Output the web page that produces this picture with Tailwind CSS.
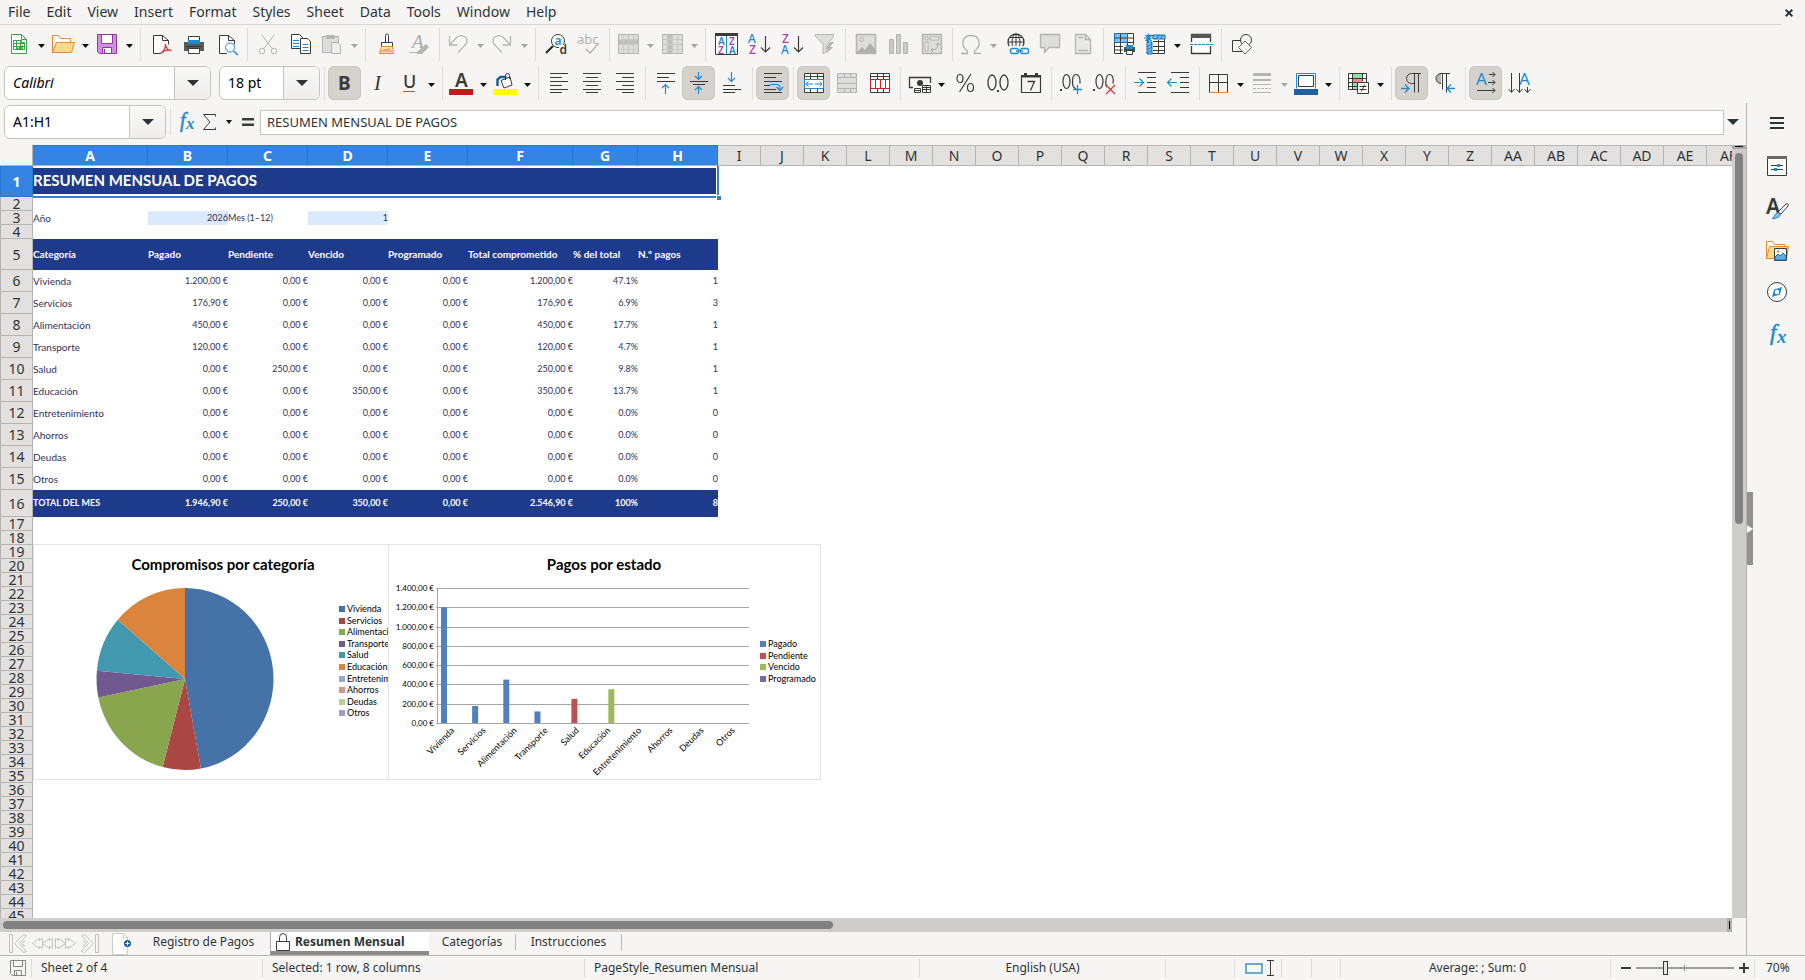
<!DOCTYPE html>
<html lang="en">
<head>
    <meta charset="UTF-8">
    <meta name="viewport" content="width=device-width, initial-scale=1.0">
    <title>Resumen Mensual - Calc</title>
    <script src="https://cdn.jsdelivr.net/npm/@tailwindcss/browser@4"></script>
</head>
<body class="h-screen flex flex-col overflow-hidden bg-[#f6f5f4] text-[#2e3436] text-sm font-['Noto_Sans',sans-serif]">
    <!-- Menu bar -->
    <nav class="flex h-[25px] shrink-0 items-start">
        <div id="menu" class="flex h-full flex-1 items-center border-b border-[#d9d8d6]"></div>
        <button aria-label="Close document" class="flex h-full w-6 items-center pl-1">
            <svg width="8" height="8" viewBox="0 0 8 8" fill="none" stroke="#2e3436" stroke-width="2"><path d="M.7.7l6.600 6.600M7.300.7L.7 7.300"/></svg>
        </button>
    </nav>

    <!-- Toolbars -->
    <div id="standard-toolbar" class="flex h-[38px] shrink-0 items-center pl-1"></div>
    <div class="flex h-10 shrink-0 items-center pl-1">
        <div class="flex h-[34px] w-[207px] shrink-0 overflow-hidden rounded-md border border-[#c6c3bf] bg-white">
            <input aria-label="Font name" value="Calibri" class="min-w-0 flex-1 px-2 italic text-black outline-none">
            <button aria-label="Font list" class="flex w-9 items-center justify-center border-l border-[#c6c3bf] bg-linear-to-b from-[#f8f8f7] to-[#eeedeb]">
                <svg width="12" height="6" viewBox="0 0 12 6" fill="#2e3436"><path d="M0 0h12L6 6z"/></svg>
            </button>
        </div>
        <div class="ml-2 flex h-[34px] w-[101px] shrink-0 overflow-hidden rounded-md border border-[#c6c3bf] bg-white">
            <input aria-label="Font size" value="18 pt" class="min-w-0 flex-1 px-2 text-black outline-none">
            <button aria-label="Size list" class="flex w-9 items-center justify-center border-l border-[#c6c3bf] bg-linear-to-b from-[#f8f8f7] to-[#eeedeb]">
                <svg width="12" height="6" viewBox="0 0 12 6" fill="#2e3436"><path d="M0 0h12L6 6z"/></svg>
            </button>
        </div>
        <div id="format-toolbar" class="flex items-center"></div>
    </div>

    <div class="flex min-h-0 flex-1">
        <main class="flex min-w-0 flex-1 flex-col">
            <!-- Formula bar -->
            <div class="flex h-[42px] shrink-0 items-center pb-1 pl-1">
                <div class="flex h-[34px] w-[162px] shrink-0 overflow-hidden rounded-md border border-[#c6c3bf] bg-white">
                    <input aria-label="Name box" value="A1:H1" class="min-w-0 flex-1 px-2 text-black outline-none">
                    <button aria-label="Named ranges" class="flex w-9 items-center justify-center border-l border-[#c6c3bf] bg-linear-to-b from-[#f8f8f7] to-[#eeedeb]">
                        <svg width="12" height="6" viewBox="0 0 12 6" fill="#2e3436"><path d="M0 0h12L6 6z"/></svg>
                    </button>
                </div>
                <div class="ml-1 h-[26px] w-px bg-[#dddcda]"></div>
                <button aria-label="Function wizard" class="ml-1">
                    <svg width="24" height="24" viewBox="0 0 24 24" fill="#1e8bcd" font-family="Liberation Serif" font-style="italic" font-weight="bold"><text x="5" y="17" font-size="20" font-weight="normal" stroke="#1e8bcd" stroke-width=".5">f</text><text x="11" y="19" font-size="17">x</text></svg>
                </button>
                <button aria-label="Select function" class="flex items-center">
                    <svg width="24" height="24" viewBox="0 0 24 24" fill="none" stroke="#3a3a38"><path d="M16.500 6.500V4.500H4.500L11 12l-6.500 7.500h12v-2"/></svg>
                    <svg class="ml-[3px]" width="6" height="4" viewBox="0 0 6 4" fill="#111"><path d="M0 0h6L3 4z"/></svg>
                </button>
                <button aria-label="Formula" class="ml-1">
                    <svg width="24" height="24" viewBox="0 0 24 24" fill="#3a3a38"><path d="M6 8h12v2.500H6zM6 13.500h12V16H6z"/></svg>
                </button>
                <input aria-label="Input line" value="RESUMEN MENSUAL DE PAGOS" class="h-[25px] min-w-0 flex-1 border border-[#c6c3bf] bg-white px-1.5 text-[13px] outline-none">
                <button aria-label="Expand formula bar" class="flex w-[22px] justify-center pr-1">
                    <svg width="12" height="6" viewBox="0 0 12 6" fill="#2e3436"><path d="M0 0h12L6 6z"/></svg>
                </button>
            </div>

            <!-- Sheet -->
            <div class="flex min-h-0 flex-1">
                <div class="relative min-w-0 flex-1 overflow-hidden bg-white">
                    <table class="w-0 table-fixed border-separate border-spacing-0">
                        <colgroup id="cols"></colgroup>
                        <thead><tr id="col-heads" class="h-[21px]"></tr></thead>
                        <tbody id="rows" class="font-[Lato,sans-serif] text-[10px] leading-3 text-[#2f3158]"></tbody>
                    </table>
                    <!-- Charts float over the cells -->
                    <div class="absolute left-[33px] top-[399px] flex font-[Lato,sans-serif]">
                        <svg id="pie" class="-mr-px border border-[#e3e3e3] bg-white" width="356" height="236" viewBox="0 0 354 234"></svg>
                        <svg id="bars" class="border border-[#e3e3e3] bg-white" width="433" height="236" viewBox="0 0 431 234"></svg>
                    </div>
                </div>
                <div class="flex w-3.5 shrink-0 flex-col items-center bg-[#cecdcc]">
                    <div class="h-1 w-full bg-[#a9a8a7] px-[3px] pt-px"><div class="h-px bg-black"></div></div>
                    <div class="mt-1 h-[48%] w-2 rounded-full bg-[#808180]"></div>
                </div>
            </div>
            <div class="mr-3.5 flex h-3.5 shrink-0 items-center bg-[#cecdcc] pl-[3px]">
                <div class="h-2 w-[48%] rounded-full bg-[#808180]"></div>
                <div class="ml-auto flex h-full w-[5px] items-center justify-center bg-[#b0afae]"><div class="h-2 w-px bg-black"></div></div>
            </div>

            <!-- Sheet tabs -->
            <div class="flex h-[23px] shrink-0 items-stretch text-xs">
                <div class="flex shrink-0 items-center pl-2 text-[#c2c2c0]">
                    <button aria-label="First sheet"><svg width="24" height="21" viewBox="0 0 24 21" fill="none" stroke="currentColor"><path d="M1.500 1.500h3v18h-3zM18.500 2.500l-3-1-9 9 9 9 3-1-7-8zM17 8a2.500 2.500 0 1 0 .1 5"/></svg></button>
                    <button aria-label="Previous sheet"><svg width="22" height="21" viewBox="0 0 22 21" fill="none" stroke="currentColor"><path d="M10.500 5.500v10l-3-2v2l-7-5 7-5v2zM20.500 5.500v10l-3-2v2l-7-5 7-5v2z"/></svg></button>
                    <button aria-label="Next sheet"><svg width="22" height="21" viewBox="0 0 22 21" fill="none" stroke="currentColor"><path d="M1.500 5.500v10l3-2v2l7-5-7-5v2zM11.500 5.500v10l3-2v2l7-5-7-5v2z"/></svg></button>
                    <button aria-label="Last sheet"><svg width="24" height="21" viewBox="0 0 24 21" fill="none" stroke="currentColor"><path d="M19.500 1.500h3v18h-3zM5.500 2.500l3-1 9 9-9 9-3-1 7-8zM7 8a2.500 2.500 0 1 1-.1 5"/></svg></button>
                </div>
                <button aria-label="Add sheet" class="ml-3 shrink-0">
                    <svg width="20" height="22" viewBox="0 0 20 22"><path d="M.5.500h11l4 4v17h-15z" fill="#fff" stroke="#cfcfcd"/><path d="M11.500.500v4h4" fill="none" stroke="#cfcfcd"/><circle cx="15.500" cy="10.500" r="3.500" fill="#1f5c99"/><path d="M15.500 8.500v4M13.500 10.500h4" stroke="#fff"/></svg>
                </button>
                <button class="ml-3 mr-[7px] w-[119px] shrink-0 pb-1">Registro de Pagos</button>
                <button class="flex w-[159px] shrink-0 items-center border-b-4 border-l border-b-[#8c8c8b] border-l-[#a9a8a7] bg-white pl-1 font-bold">
                    <svg class="mr-1 shrink-0" width="16" height="20" viewBox="0 0 16 20" fill="none" stroke="#3a3a38"><path d="M1.500 9.500h13v9h-13zM4.500 9V5.500a3.500 4 0 0 1 7 0V9"/></svg>
                    Resumen Mensual
                </button>
                <div class="flex h-full shrink-0 items-center pb-1">
                    <button class="w-[87px] border-r border-[#b9b8b6] leading-4">Categorías</button>
                    <button class="w-[106px] border-r border-[#b9b8b6] leading-4">Instrucciones</button>
                </div>
            </div>
        </main>

        <!-- Sidebar -->
        <aside class="relative w-[59px] shrink-0 border-l border-[#b6b5b3]">
            <div id="sidebar" class="flex flex-col items-center gap-[18px] pl-0.5 pt-[9px]"></div>
            <button aria-label="Hide sidebar" class="absolute left-0 top-[389px] flex h-[73px] w-1.5 items-center bg-[#929191]">
                <svg width="6" height="8" viewBox="0 0 6 8" fill="#fff"><path d="M0 0l6 4-6 4z"/></svg>
            </button>
        </aside>
    </div>

    <!-- Status bar -->
    <footer class="flex h-[25px] shrink-0 items-center border-t border-[#b6b5b3] text-xs">
        <div class="flex h-[18px] w-8 items-center border-r border-[#dddcda] pl-2.5">
            <svg width="16" height="16" viewBox="0 0 16 16" fill="none" stroke="#858583"><path d="M.5.500h15v15H2.500l-2-2zM3.500.500v6h9v-6M4.500 15v-4.500h7V15M6.500 12v3"/></svg>
        </div>
        <div class="w-[231px] border-r border-[#dddcda] pl-[9px] leading-[18px]">Sheet 2 of 4</div>
        <div class="w-[322px] border-r border-[#dddcda] pl-[9px] leading-[18px]">Selected: 1 row, 8 columns</div>
        <div class="w-[335px] border-r border-[#dddcda] pl-[9px] leading-[18px]">PageStyle_Resumen Mensual</div>
        <div class="w-[246px] border-r border-[#dddcda] text-center leading-[18px]">English (USA)</div>
        <div class="h-[18px] w-[69px] border-r border-[#dddcda]"></div>
        <div class="flex h-[18px] w-[47px] items-center border-r border-[#dddcda] pl-2.5">
            <svg width="30" height="16" viewBox="0 0 30 16" fill="none"><path d="M1 4h16v9H1z" stroke="#3a95bd" stroke-width="1.500"/><path d="M22 .5h7M22 15.500h7M25.500.500v15" stroke="#3a3a38"/></svg>
        </div>
        <div class="h-[18px] w-[30px] border-r border-[#dddcda]"></div>
        <div class="h-[18px] w-[29px] border-r border-[#dddcda]"></div>
        <div class="flex-1 border-r border-[#dddcda] pl-1 text-center leading-[18px]">Average: ; Sum: 0</div>
        <div class="flex h-[18px] w-36 items-center border-r border-[#dddcda] pl-2.5">
            <button aria-label="Zoom out"><svg width="10" height="10" viewBox="0 0 10 10" stroke="#3a3a38" stroke-width="2"><path d="M0 5h10"/></svg></button>
            <div class="relative mx-[5px] flex h-4 w-[98px] items-center">
                <div class="absolute left-12 h-1.5 w-px bg-[#8c8c8b]"></div>
                <input type="range" aria-label="Zoom" min="0" max="100" value="29" class="h-0.5 w-full appearance-none bg-[#9b9b99] [&::-webkit-slider-thumb]:h-3.5 [&::-webkit-slider-thumb]:w-[5px] [&::-webkit-slider-thumb]:appearance-none [&::-webkit-slider-thumb]:border [&::-webkit-slider-thumb]:border-[#3a3a38] [&::-webkit-slider-thumb]:bg-[#e8e7e5]">
            </div>
            <button aria-label="Zoom in"><svg width="10" height="10" viewBox="0 0 10 10" stroke="#3a3a38" stroke-width="2"><path d="M0 5h10M5 0v10"/></svg></button>
        </div>
        <div class="w-[50px] pl-[11px] leading-[18px]">70%</div>
    </footer>

    <script>
        const D = '#3a3a38', G = '#b4b4b2', L = '#dddddb', B = '#1e8bcd', P = '#a33fb5';

        // 24x24 icon bodies
        const icons = {
            newdoc: `<g stroke="#3a9f45"><path d="M4.500 2.500h10l5 5v14h-15z" fill="#fff"/><path d="M14.500 2.500v5h5M6.500 8.500h8v2h3v7h-11zM6.500 11.500h11M6.500 14.500h11M9.500 8.500v9M13.500 8.500v9"/><path d="M10.500 17v-1.500M12.500 17v-3M15 17v-3.500" stroke-width="1.500"/></g>`,
            open: `<path d="M1.500 20.500v-17h6l2 3h10v4" stroke="#ed8733" fill="#fff"/><path d="M1.500 20.500l4-10h18l-3 10z" fill="#f8db8f" stroke="#ed8733"/>`,
            save: `<path d="M2.500 2.500h19v19h-17l-2-2z" fill="#cf8fe0" stroke="#92379d"/><path d="M6.500 2.500h11v9h-11zM7.500 21.500v-6h9v6z" fill="#fff" stroke="#92379d"/><path d="M9.500 17v4" stroke="#92379d" stroke-width="1.500"/>`,
            pdf: `<path d="M12 21.500H4.500v-18h9l6 5v4" stroke="${D}" fill="#fff"/><path d="M13.500 3.500v5h6" stroke="${D}"/><path d="M11.500 21.500c3-2 5-6 5-9.500 0 4 3 7 6 6.500-4-1-8 0-11 3z" stroke="#e03b3b" stroke-width="1.300"/>`,
            print: `<path d="M6.500 10V4.500h11V10" fill="#fff" stroke="${D}"/><path d="M2 10h20v9H2z" fill="#5b5b5b"/><path d="M6 8h12v4H6z" fill="${B}"/><path d="M6.500 16.500h11v5h-11z" fill="#fff" stroke="${D}"/><path d="M4 14.500h16" stroke="#333"/>`,
            preview: `<path d="M12 21.500H4.500v-18h9l6 5v4" stroke="${D}" fill="#fff"/><path d="M13.500 3.500v5h6" stroke="${D}"/><circle cx="15" cy="15.500" r="4.500" stroke="${B}" fill="#fff"/><path d="M18.500 19l4.500 4" stroke="${B}" stroke-width="1.500"/>`,
            cut: `<g stroke="${G}"><path d="M5.500 2.500l10.500 14M18.500 2.500L8 16.500"/><circle cx="6" cy="19" r="2.800"/><circle cx="18" cy="19" r="2.800"/></g>`,
            copy: `<g stroke="${D}" fill="#fff"><path d="M2.500 2.500h8l3 3v11h-11z"/><path d="M11.500 6.500h7l3 3v12h-10z"/></g><path d="M4 8.500h6M4 11.500h6M4 14.500h6M13.500 12.500h6M13.500 15.500h6M13.500 18.500h6" stroke="${B}"/>`,
            paste: `<g stroke="${G}"><path d="M2.500 4.500h16v16h-16z" fill="${L}"/><path d="M6.500 3.500h8v3h-8z" fill="${G}"/><path d="M11.500 10.500h6l3 3v8h-9z" fill="#eee"/></g>`,
            brush: `<path d="M11.500 14V3.500a1.500 1.500 0 0 1 3 0V11" stroke="${D}" fill="#fff"/><path d="M7.500 14.500v-4h11v4z" stroke="${D}" fill="#fff"/><path d="M7.500 14.500h11l1 7h-14z" fill="#fce5b0" stroke="#ed8733"/><path d="M9 18l7-1M6 19l12 0" stroke="#ed8733"/>`,
            clear: `<text x="5" y="16" font-size="19" font-style="italic" font-family="Liberation Serif" fill="#aaa">A</text><path d="M10 20l9-8 3 3-7 7h-5z" fill="${G}"/><path d="M2 20.500h10" stroke="${G}"/>`,
            undo: `<path d="M3.500 4v9h8M4 12.500l7-7.500c4-3 10-1 10 4 0 4-5 6-9 12" stroke="${G}" stroke-width="1.300"/>`,
            redo: `<path d="M20.500 4v9h-8M20 12.500L13 5C9 2 3 4 3 9c0 4 5 6 9 12" stroke="${G}" stroke-width="1.300"/>`,
            find: `<circle cx="14" cy="9" r="6.500" stroke="${D}" fill="#fff"/><path d="M9 14l-7 7" stroke="#222" stroke-width="2"/><text x="10.500" y="13" font-size="12" font-weight="600" fill="${B}">a</text><path d="M15 13h8v10h-8z" fill="#f6f5f4"/><text x="15.500" y="22" font-size="12" font-weight="600" fill="${D}">d</text>`,
            spell: `<text x="0" y="12" font-size="13" fill="${G}">abc</text><path d="M9 17l4 4L22 11" stroke="${G}" stroke-width="1.500"/>`,
            row: `<path d="M2.500 2.500h20v19h-20z" fill="${L}"/><path d="M3 7h19v5H3z" fill="#bfbfbd"/><path d="M7.500 2v20M12.500 2v20M17.500 2v20M2 7.500h20M2 12.500h20M2 17.500h20" stroke="#c9c9c7"/><path d="M2.500 2.500h20v19h-20z" stroke="${G}"/>`,
            col: `<path d="M2.500 2.500h20v19h-20z" fill="${L}"/><path d="M7 3h5v18H7z" fill="#bfbfbd"/><path d="M7.500 2v20M12.500 2v20M17.500 2v20M2 7.500h20M2 12.500h20M2 17.500h20" stroke="#c9c9c7"/><path d="M2.500 2.500h20v19h-20z" stroke="${G}"/>`,
            sort: `<path d="M1.500 1.500h22v21h-22z" fill="#fff" stroke="${D}"/><path d="M1 1h23v3H1z" fill="${D}"/><path d="M12.500 4v18" stroke="${B}"/><g font-size="10" font-weight="600"><text x="4" y="13" fill="${B}">A</text><text x="15" y="13" fill="${P}">Z</text><text x="4" y="22" fill="${P}">Z</text><text x="15" y="22" fill="${B}">A</text></g>`,
            asc: `<g font-size="12" font-weight="500"><text x="1" y="11" fill="${B}">A</text><text x="2" y="22" fill="${P}">Z</text></g><path d="M18.500 4v16M14 15.500l4.500 4.500 4.500-4.500" stroke="${D}" stroke-width="1.200"/>`,
            desc: `<g font-size="12" font-weight="500"><text x="2" y="11" fill="${P}">Z</text><text x="1" y="22" fill="${B}">A</text></g><path d="M18.500 4v16M14 15.500l4.500 4.500 4.500-4.500" stroke="${D}" stroke-width="1.200"/>`,
            filter: `<path d="M2.500 2.500h18v2l-6.500 8v7l-4 2v-9l-7.500-8z" fill="${L}" stroke="${G}"/><path d="M17 10l-5 7h3l-2 5 7-7h-3l4-5z" fill="${G}"/>`,
            image: `<path d="M2.500 2.500h19v19h-19z" fill="${L}" stroke="${G}" stroke-width="1.500"/><circle cx="7.500" cy="7.500" r="2" stroke="${G}"/><path d="M3 20l5-5 3 3 5-7 5 6v4H3z" fill="#b0b0ae"/>`,
            chart: `<g fill="#c9c9c7" stroke="${G}"><path d="M2.500 7.500h4v14h-4zM9.500 2.500h4v19h-4zM16.500 10.500h4v11h-4z"/></g>`,
            pivot: `<path d="M2.500 2.500h19v19h-19z" fill="${L}" stroke="${G}" stroke-width="1.500"/><path d="M5 5h3v3H5zM10 5h9v3h-9zM5 10h3v9H5z" fill="#e9e9e7" stroke="${G}"/><path d="M11 18c5 0 7-2 7-7M16 13l2-2.500 2 2.500M13 16l-2 2 2 2" stroke="#aaa"/>`,
            omega: `<path d="M2 21.500h6.500v-2.500C1 14 3 3.500 12 3.500S23 14 15.500 19v2.500H22" stroke="#b0b0ae" stroke-width="1.300"/>`,
            link: `<circle cx="11" cy="10" r="8" stroke="${D}" stroke-width="1.300"/><path d="M3 10h16M11 2v16M5 5.500h12M5 14.500h12" stroke="${D}"/><ellipse cx="11" cy="10" rx="4" ry="8" stroke="${D}"/><path d="M4 14h20v9H4z" fill="#f6f5f4"/><rect x="5.500" y="16.500" width="8" height="5" rx="2" stroke="${B}" stroke-width="1.300"/><rect x="15.500" y="16.500" width="8" height="5" rx="2" stroke="${B}" stroke-width="1.300"/><path d="M11 19h7" stroke="${B}" stroke-width="1.300"/>`,
            comment: `<path d="M2.500 2.500h19v13H11l-4.500 5v-5h-4z" fill="${L}" stroke="${G}" stroke-width="1.300"/>`,
            header: `<path d="M4.500 2.500h10l5 5v14h-15z" fill="#e8e8e6" stroke="${G}" stroke-width="1.300"/><path d="M14.500 2.500v5h5M7 5.500h5M7 18.500h10" stroke="${G}" stroke-width="1.600"/>`,
            printarea: `<path d="M2.500 1.500h19v20h-19z" fill="#fff" stroke="${D}"/><path d="M3 2h13v8H3z" fill="#7cc0f4"/><path d="M2 6h20M2 10.500h20M2 14.500h20M2 18h20M8.500 2v20M15.500 2v20" stroke="${D}"/><path d="M2.500 10.500v-9h13v9z" stroke="#0e6fb5"/><path d="M11 13h12v10H11z" fill="#fff"/><path d="M12 15h11v5H12z" fill="#4a4a4a"/><path d="M14 13h7v4h-7z" fill="${B}"/><path d="M14.500 18.500h6v4h-6z" fill="#fff" stroke="${D}"/>`,
            freeze: `<path d="M4.500 3.500h17v18h-17z" fill="#fff" stroke="${D}"/><path d="M10 9.500h12M10 14.500h12M10 18.500h12M15.500 8v14" stroke="${D}"/><path d="M10 3h12v4H10zM4 10h5v12H4z" fill="#7cc0f4" stroke="#0e6fb5"/><path d="M4 15l5-3M4 18l5-3M4 21l5-3M13 7l3-4M17 7l3-4" stroke="#0e6fb5"/><path d="M1 6h9M5.500 1.500v9M2.500 3l6 6M8.500 3l-6 6" stroke="${B}" stroke-width="1.200"/>`,
            split: `<path d="M2.500 2.500h19v19h-19z" fill="#fff" stroke="${D}" stroke-width="1.300"/><path d="M2 2h20v4H2z" fill="#555"/><path d="M0 10h24v4H0z" fill="#f6f5f4"/><path d="M1 12.500h23" stroke="${B}" stroke-dasharray="3 1"/>`,
            shapes: `<g stroke="${D}" fill="#f6f5f4"><path d="M2.500 8.500h12v11h-12z"/><circle cx="16" cy="8" r="5.500"/><path d="M15 9l6.500 6.500L15 22l-6.500-6.500z" stroke="#666"/></g>`,

            bold: `<text x="5" y="19" font-size="19" font-weight="bold" fill="${D}">B</text>`,
            italic: `<text x="8" y="19" font-size="21" font-style="italic" font-family="Liberation Serif" fill="${D}">I</text>`,
            underline: `<text x="6" y="17" font-size="18" font-weight="500" fill="${D}">U</text><path d="M6 20.500h12" stroke="${B}"/>`,
            fontcolor: `<text x="6" y="16" font-size="19" font-weight="600" fill="${D}">A</text><path d="M0 18h24v6H0z" fill="#c01c1c"/>`,
            highlight: `<path d="M0 18h24v6H0z" fill="#ff0"/><path d="M4.500 15V8.500l3-2.500h6" stroke="#1f5c99" stroke-width="2.500"/><path d="M8 9.500l9-3.500 2 8-8 3z" fill="#fff" stroke="${D}"/><path d="M12.500 9V4.500a2 2 0 0 1 4 0V8" stroke="${D}"/>`,
            left: `<path d="M3 2.500h18M3 6.500h12M3 10.500h18M3 14.500h12M3 18.500h18M3 21.500h12" stroke="${D}"/>`,
            center: `<path d="M3 2.500h18M6 6.500h12M3 10.500h18M6 14.500h12M3 18.500h18M6 21.500h12" stroke="${D}"/>`,
            right: `<path d="M3 2.500h18M9 6.500h12M3 10.500h18M9 14.500h12M3 18.500h18M9 21.500h12" stroke="${D}"/>`,
            top: `<path d="M3 2.500h18M3 6.500h12M3 10.500h18" stroke="${D}"/><path d="M11.500 23v-9M8 17l3.500-3.500L15 17" stroke="${B}" stroke-width="1.200"/>`,
            middle: `<path d="M3 10.500h18M6 13.500h12" stroke="${D}"/><path d="M11.500 1v7M8 5l3.500 3.500L15 5M11.500 23v-7M8 19l3.500-3.500L15 19" stroke="${B}" stroke-width="1.200"/>`,
            bottom: `<path d="M3 14.500h12M3 18.500h18M3 21.500h12" stroke="${D}"/><path d="M11.500 1v9M8 7l3.500 3.500L15 7" stroke="${B}" stroke-width="1.200"/>`,
            wrap: `<path d="M3 2.500h18M3 6.500h12M3 10.500h18M3 14.500h6M3 18.500h12M3 21.500h18" stroke="${D}"/><path d="M9 13.500h7c2 0 3 2 3 5M15.500 16l3.500 3.500 3-3.500" stroke="${B}" stroke-width="1.200"/>`,
            merge: `<path d="M2.500 2.500h19v19h-19z" fill="#fff" stroke="${D}"/><path d="M2 5.500h20M2 17.500h20M8.500 2v20M15.500 2v20" stroke="${D}"/><path d="M2.500 8.500h19v9h-19z" fill="#fff" stroke="${B}"/><path d="M4 13h7M13 13h7M6.500 10.500L4 13l2.500 2.500M17.500 10.500L20 13l-2.500 2.500" stroke="${B}"/>`,
            mergecells: `<path d="M2.500 2.500h19v19h-19z" fill="${L}" stroke="${G}"/><path d="M2 6.500h20M2 17.500h20M9.500 2v5M15.500 2v5M9.500 17v5M15.500 17v5M3 12.500h19" stroke="${G}"/>`,
            unmerge: `<path d="M2.500 2.500h19v19h-19z" fill="#fff" stroke="${D}"/><path d="M2 5.500h20M9.500 2v20M15.500 2v20" stroke="${D}"/><path d="M2.500 8.500h19v9h-19zM7.500 8.500v9M12.500 8.500v9M17.500 8.500v9" fill="#fff" stroke="#d02020"/>`,
            currency: `<path d="M6 16.500H2.500v-10h21V12" stroke="${D}" stroke-width="1.300"/><circle cx="13" cy="12" r="3" fill="${D}"/><g stroke="${D}" fill="#fff"><path d="M15.500 14.500h8v7h-8zM7.500 17.500h6v4h-6z"/><path d="M15 16.500h9M15 18.500h9M7 19.500h7M19.500 14v7"/></g>`,
            percent: `<g stroke="${D}" stroke-width="1.200"><ellipse cx="7" cy="7.500" rx="3" ry="4"/><ellipse cx="17.500" cy="16.500" rx="3" ry="4"/><path d="M18 3L6.500 21"/></g>`,
            number: `<g stroke="${D}" stroke-width="1.300"><ellipse cx="6" cy="11.500" rx="4" ry="7.500"/><ellipse cx="18" cy="11.500" rx="4" ry="7.500"/></g><path d="M11 19h2v2h-2z" fill="${D}"/>`,
            date: `<path d="M2.500 4.500h19v17h-19z" stroke="${D}" stroke-width="1.200"/><path d="M2 4h20v2.500H2zM5 2h3v3H5zM16 2h3v3h-3z" fill="${D}"/><path d="M8.500 10.500h7l-4 9" stroke="${D}" stroke-width="1.300"/>`,
            adddec: `<g stroke="${D}" stroke-width="1.200"><ellipse cx="6.500" cy="10.500" rx="3.500" ry="7"/><path d="M16 17.500c-2.500 0-3.500-3-3.500-7s1-7 3.500-7 4 3 4 7v2"/></g><path d="M0 18h2v2H0z" fill="${D}"/><path d="M17.500 14v9M13 18.500h9" stroke="${B}" stroke-width="1.300"/>`,
            deldec: `<g stroke="${D}" stroke-width="1.200"><ellipse cx="6.500" cy="10.500" rx="3.500" ry="7"/><path d="M14 16c-2-2-1.500-12.500 2.500-12.500 3 0 4.500 4 3.500 9"/></g><path d="M0 18h2v2H0z" fill="${D}"/><path d="M13 14l9 9M22 14l-9 9" stroke="#d83030" stroke-width="1.200"/>`,
            indent: `<path d="M4 1.500h18M13 6.500h9M13 11.500h9M13 16.500h9M4 21.500h18" stroke="${D}"/><path d="M0 11.500h9M5.500 7.500l4 4-4 4" stroke="${B}" stroke-width="1.200"/>`,
            outdent: `<path d="M4 1.500h18M13 6.500h9M13 11.500h9M13 16.500h9M4 21.500h18" stroke="${D}"/><path d="M1 11.500h9M4.500 7.500l-4 4 4 4" stroke="${B}" stroke-width="1.200"/>`,
            borders: `<path d="M3.500 21V3.500h18V21M3 11.500h18M12.500 3v18" stroke="${D}"/><path d="M3 21.500h19" stroke="#ed8733"/>`,
            lines: `<path d="M3 3.500h18" stroke="${G}" stroke-width="3"/><path d="M3 9h18" stroke="${G}" stroke-width="2"/><path d="M3 13.500h18M3 21.500h18" stroke="${G}"/><path d="M3 17.500h18" stroke="${G}" stroke-dasharray="3 1"/>`,
            bordercolor: `<path d="M2.500 17.500v-15h19v15" stroke="${B}"/><path d="M4.500 4.500h15v11h-15z" fill="#fff" stroke="${D}"/><path d="M0 18h24v6H0z" fill="#2060a0"/>`,
            condfmt: `<path d="M2.500 2.500h18v16h-18z" fill="#fff" stroke="${D}"/><path d="M7 3h10v4H7z" fill="#8fe0a2"/><path d="M7 7h10v5H7z" fill="#f58a8a"/><path d="M7 12h4v6H7z" fill="#8fe0a2"/><path d="M2 7.500h19M2 11.500h10M2 15.500h10M6.500 2v17M16.500 2v8" stroke="${D}"/><path d="M11.500 11.500h11v11h-11z" fill="#fff" stroke="${D}"/><path d="M13.500 15.500h7M13.500 18.500h7M18.500 13.500l-3 7" stroke="${D}"/>`,
            ltr: `<path d="M21 2.500H11.500a5 5 0 0 0 0 10H14M14.500 2.500v19M18.500 2.500v19" stroke="${D}"/><path d="M1 17.500h8M5 13.500l4 4-4 4" stroke="${B}" stroke-width="1.300"/>`,
            rtl: `<path d="M8 2.500a5 5 0 0 0 0 10z" fill="${G}"/><path d="M17 2.500H8a5 5 0 0 0 0 10M9.500 2.500v16M13.500 2.500v19" stroke="${D}"/><path d="M14 17.500h8M18 13.500l-4 4 4 4" stroke="${B}" stroke-width="1.300"/>`,
            texthor: `<text x="2" y="14" font-size="17" fill="${B}">A</text><path d="M15 3.500h6M18.500 1l2.500 2.500L18.500 6M14 11.500h7M18.500 9l2.500 2.500-2.500 2.500M3 19.500h18M18.500 17l2.500 2.500-2.500 2.500" stroke="${D}"/>`,
            textver: `<text x="12" y="14" font-size="17" fill="${B}">A</text><path d="M4.500 2v19M1.500 18l3 3.500 3-3.500M12.500 2v19M9.500 18l3 3.500 3-3.500M20.500 16v5M17.500 18l3 3.500 3-3.500" stroke="${D}"/>`,

            menu: `<path d="M5 6h14M5 11h14M5 16h14" stroke="#2e3436" stroke-width="2"/>`,
            properties: `<path d="M2.500 2.500h19v19h-19z" fill="#fff" stroke="${D}"/><path d="M2 2h20v3H2z" fill="#6a6a6a"/><path d="M6 11.500h12M6 15.500h12" stroke="${D}"/><path d="M12 10h3v3h-3zM9 14h3v3H9z" fill="${B}"/>`,
            styles: `<text x="1" y="18" font-size="21" font-weight="600" fill="${D}">A</text><path d="M13 16l8-8c1-1 3 0 2 2l-7 8z" fill="#fff" stroke="${D}"/><path d="M7 22.500c3-1 2-4 4-5s5 0 4 2-5 3.500-8 3z" fill="#7cc0f4" stroke="${B}"/>`,
            gallery: `<path d="M1.500 20.500v-17h6l2 3h10v4" stroke="#ed8733" fill="#fff"/><path d="M1.500 20.500l3-12h19l-2 12z" fill="#f8db8f" stroke="#ed8733"/><path d="M9.500 10.500h12v12h-12z" fill="#fff" stroke="${D}"/><path d="M10 22v-3l3-3 2 2 3-3 3 3v4z" fill="#5aaeea" stroke="#1f6fae"/><circle cx="13" cy="13.500" r="1.200" fill="#ed8733"/>`,
            navigator: `<circle cx="12" cy="12" r="9.500" fill="#fff" stroke="${D}"/><path d="M17 7l-2 7.500L7 17l2-7.500z" fill="${B}"/><circle cx="12" cy="12" r="2.200" fill="#fff"/>`,
            functions: `<g fill="${B}" font-family="Liberation Serif" font-style="italic"><text x="5" y="18" font-size="23" stroke="${B}" stroke-width=".5">f</text><text x="12" y="21" font-size="19" font-weight="bold">x</text></g>`
        };

        const svg = name => `<svg class="overflow-visible" width="24" height="24" viewBox="0 0 24 24" fill="none">${icons[name]}</svg>`;

        // "|" separator, "+" has a drop-down, "*" pressed, "-" disabled
        function toolbar(id, spec) {
            document.getElementById(id).innerHTML = spec.split(' ').map(item => {
                if (item === '|') return '<div class="flex w-2 shrink-0 justify-center"><div class="h-[33px] w-px bg-[#dddcda]"></div></div>';
                const name = item.replace(/[+*-]/g, '');
                if (item.includes('+')) {
                    const color = item.includes('-') ? '#a6a6a4' : '#111';
                    return `<button aria-label="${name}" class="flex h-[34px] w-[30px] shrink-0 items-center pl-[3px]">${svg(name)}</button>
                        <button aria-label="${name} options" class="flex h-[34px] w-3.5 shrink-0 items-center justify-center pt-1"><svg width="7" height="4" viewBox="0 0 7 4" fill="${color}"><path d="M0 0h7L3.500 4z"/></svg></button>`;
                }
                const pressed = item.includes('*') ? 'rounded-md bg-[#d5d1cd] ring-1 ring-inset ring-[#cbc7c2]' : '';
                return `<button aria-label="${name}" class="flex h-[34px] w-[33px] shrink-0 items-center pl-[5px] ${pressed}">${svg(name)}</button>`;
            }).join('');
        }

        toolbar('standard-toolbar', 'newdoc+ open+ save+ | pdf print preview | cut- copy paste+- | brush clear- | undo+- redo+- | find spell- | row+- col+- | sort asc desc filter- | image- chart- pivot- | omega+- link comment- header- | printarea freeze+ split | shapes');
        toolbar('format-toolbar', '| bold* italic underline+ | fontcolor+ highlight+ | left center right | top middle* bottom | wrap* | merge* mergecells- unmerge | currency+ percent number date | adddec deldec | indent outdent | borders+ lines+- bordercolor+ | condfmt+ | ltr* rtl | texthor* textver');

        document.getElementById('menu').innerHTML = ['File', 'Edit', 'View', 'Insert', 'Format', 'Styles', 'Sheet', 'Data', 'Tools', 'Window', 'Help']
            .map(m => `<button class="px-2">${m}</button>`).join('');

        document.getElementById('sidebar').innerHTML = ['menu', 'properties', 'styles', 'gallery', 'navigator', 'functions']
            .map(n => `<button aria-label="${n}">${svg(n)}</button>`).join('');

        // Columns
        const widths = [115, 80, 80, 80, 80, 105, 65, 80];
        const colName = i => (i > 25 ? String.fromCharCode(64 + Math.floor(i / 26)) : '') + String.fromCharCode(65 + i % 26);
        let cols = '<col style="width:33px">';
        let heads = '<th class="border-b border-r border-[#b5b4b2] bg-[#f6f5f4]"></th>';
        for (let i = 0; i < 40; i++) {
            cols += `<col style="width:${widths[i] || 43}px">`;
            heads += i < 8
                ? `<th class="border-b border-r border-t border-b-[#b5b4b2] border-r-[#2a76d0] border-t-[#2a76d0] bg-[#3584e4] p-0 leading-[18px] text-white">${colName(i)}</th>`
                : `<th class="border-b border-r border-t border-[#b5b4b2] bg-[#e2e1df] p-0 font-normal leading-[18px]">${colName(i)}</th>`;
        }
        document.getElementById('cols').innerHTML = cols;
        document.getElementById('col-heads').innerHTML = heads;

        // Rows
        const data = [
            ['Vivienda', 1200, 0, 0, 0, '47.1%', 1],
            ['Servicios', 176.9, 0, 0, 0, '6.9%', 3],
            ['Alimentación', 450, 0, 0, 0, '17.7%', 1],
            ['Transporte', 120, 0, 0, 0, '4.7%', 1],
            ['Salud', 0, 250, 0, 0, '9.8%', 1],
            ['Educación', 0, 0, 350, 0, '13.7%', 1],
            ['Entretenimiento', 0, 0, 0, 0, '0.0%', 0],
            ['Ahorros', 0, 0, 0, 0, '0.0%', 0],
            ['Deudas', 0, 0, 0, 0, '0.0%', 0],
            ['Otros', 0, 0, 0, 0, '0.0%', 0]
        ];
        const euro = n => n.toFixed(2).replace('.', ',').replace(/\B(?=(\d{3})+,)/g, '.') + ' €';
        const rowTotal = d => d[1] + d[2] + d[3] + d[4];
        const sum = k => data.reduce((s, d) => s + d[k], 0);
        const numbers = list => list.map(v => `<td class="whitespace-nowrap p-0 pb-px text-right text-[9px]">${v}</td>`).join('');

        function cells(r) {
            if (r === 1) return `<td colspan="8" class="relative bg-[#1e3a8a] p-0 pb-1 align-middle text-[15px] font-bold leading-5 text-white">RESUMEN MENSUAL DE PAGOS
                <div class="absolute -bottom-px -right-px left-0 top-0 border-b-2 border-r-2 border-[#3b7bd0]"><div class="h-full w-full border-y-2 border-r border-white"></div></div>
                <div class="absolute -bottom-[3px] -right-[3px] size-[5px] border-l border-t border-white bg-[#3b7bd0]"></div></td>`;
            if (r === 3) return '<td class="p-0">Año</td><td class="bg-[#dbeafe] p-0 text-right text-[9px]">2026</td><td class="p-0 text-[9px]">Mes (1–12)</td><td class="bg-[#dbeafe] p-0 text-right text-[9px]">1</td>';
            if (r === 5) return ['Categoría', 'Pagado', 'Pendiente', 'Vencido', 'Programado', 'Total comprometido', '% del total', 'N.º pagos']
                .map(t => `<th class="whitespace-nowrap bg-[#1e3a8a] p-0 pb-px text-left font-bold text-white">${t}</th>`).join('');
            if (r >= 6 && r <= 15) {
                const d = data[r - 6];
                return `<td class="p-0 pb-px">${d[0]}</td>` + numbers([euro(d[1]), euro(d[2]), euro(d[3]), euro(d[4]), euro(rowTotal(d)), d[5], d[6]]);
            }
            if (r === 16) return '<td class="p-0 pb-px text-[9px]">TOTAL DEL MES</td>' + numbers([euro(sum(1)), euro(sum(2)), euro(sum(3)), euro(sum(4)), euro(data.reduce((s, d) => s + rowTotal(d), 0)), '100%', sum(6)]);
            return '';
        }

        const heights = { 1: 31, 2: 14, 5: 31, 16: 27 };
        let rows = '';
        for (let r = 1; r <= 70; r++) {
            const h = heights[r] || (r >= 6 && r <= 15 ? 22 : 14);
            const head = r === 1
                ? 'border-b border-l border-r border-[#2a76d0] bg-[#3584e4] font-bold text-white'
                : 'border-b border-l border-r border-[#b5b4b2] bg-[#e2e1df] font-normal text-[#2e3436]';
            rows += `<tr class="${r === 16 ? 'font-bold text-white [&>td]:bg-[#1e3a8a]' : ''}" style="height:${h}px"><th class="p-0 pt-px text-center font-['Noto_Sans',sans-serif] text-sm leading-3 ${head}">${r}</th>${cells(r)}</tr>`;
        }
        document.getElementById('rows').innerHTML = rows;

        // Pie chart
        const pieColors = ['#4572a7', '#aa4643', '#89a54e', '#71588f', '#4198af', '#db843d', '#93a9cf', '#d19392', '#b9cd96', '#a99bbd'];
        const grand = data.reduce((s, d) => s + rowTotal(d), 0);
        const [cx, cy, rx, ry] = [151, 134, 88.5, 91];
        let angle = 0;
        let pie = '<text x="189" y="25" text-anchor="middle" font-size="15" font-weight="bold">Compromisos por categoría</text>';
        data.forEach((d, i) => {
            const next = angle + rowTotal(d) / grand * 2 * Math.PI;
            if (next > angle) {
                const large = next - angle > Math.PI ? 1 : 0;
                pie += `<path fill="${pieColors[i]}" d="M${cx} ${cy}L${cx + rx * Math.sin(angle)} ${cy - ry * Math.cos(angle)}A${rx} ${ry} 0 ${large} 1 ${cx + rx * Math.sin(next)} ${cy - ry * Math.cos(next)}z"/>`;
            }
            angle = next;
            const y = 64 + Math.round(i * 11.6);
            pie += `<rect x="305" y="${y - 3}" width="6" height="6" fill="${pieColors[i]}"/><text x="313" y="${y + 3}" font-size="9">${d[0]}</text>`;
        });
        document.getElementById('pie').innerHTML = pie;

        // Bar chart
        const barColors = ['#4f81bd', '#c0504d', '#9bbb59', '#8064a2'];
        let bars = '<text x="215" y="25" text-anchor="middle" font-size="15" font-weight="bold">Pagos por estado</text>';
        for (let v = 0; v <= 1400; v += 200) {
            const y = 178.5 - Math.round(v / 1400 * 135);
            bars += `<path d="M47 ${y}h313" stroke="#a6a6a6"/><text x="45" y="${y + 2}" text-anchor="end" font-size="8">${euro(v)}</text>`;
        }
        bars += '<path d="M48.500 43v136" stroke="#a6a6a6"/>';
        data.forEach((d, i) => {
            const x = 48 + i * 31.15;
            for (let s = 0; s < 4; s++) {
                const h = d[s + 1] / 1400 * 135;
                if (h) bars += `<rect x="${x + 4 + s * 5.8}" y="${178 - h}" width="6" height="${h}" fill="${barColors[s]}"/>`;
            }
            bars += `<text transform="translate(${x + 18} 186) rotate(-45)" text-anchor="end" font-size="9">${d[0]}</text>`;
        });
        ['Pagado', 'Pendiente', 'Vencido', 'Programado'].forEach((t, i) => {
            const y = 99 + Math.round(i * 11.5);
            bars += `<rect x="371" y="${y - 3}" width="6" height="6" fill="${barColors[i]}"/><text x="379" y="${y + 3}" font-size="9">${t}</text>`;
        });
        document.getElementById('bars').innerHTML = bars;
    </script>
</body>
</html>
